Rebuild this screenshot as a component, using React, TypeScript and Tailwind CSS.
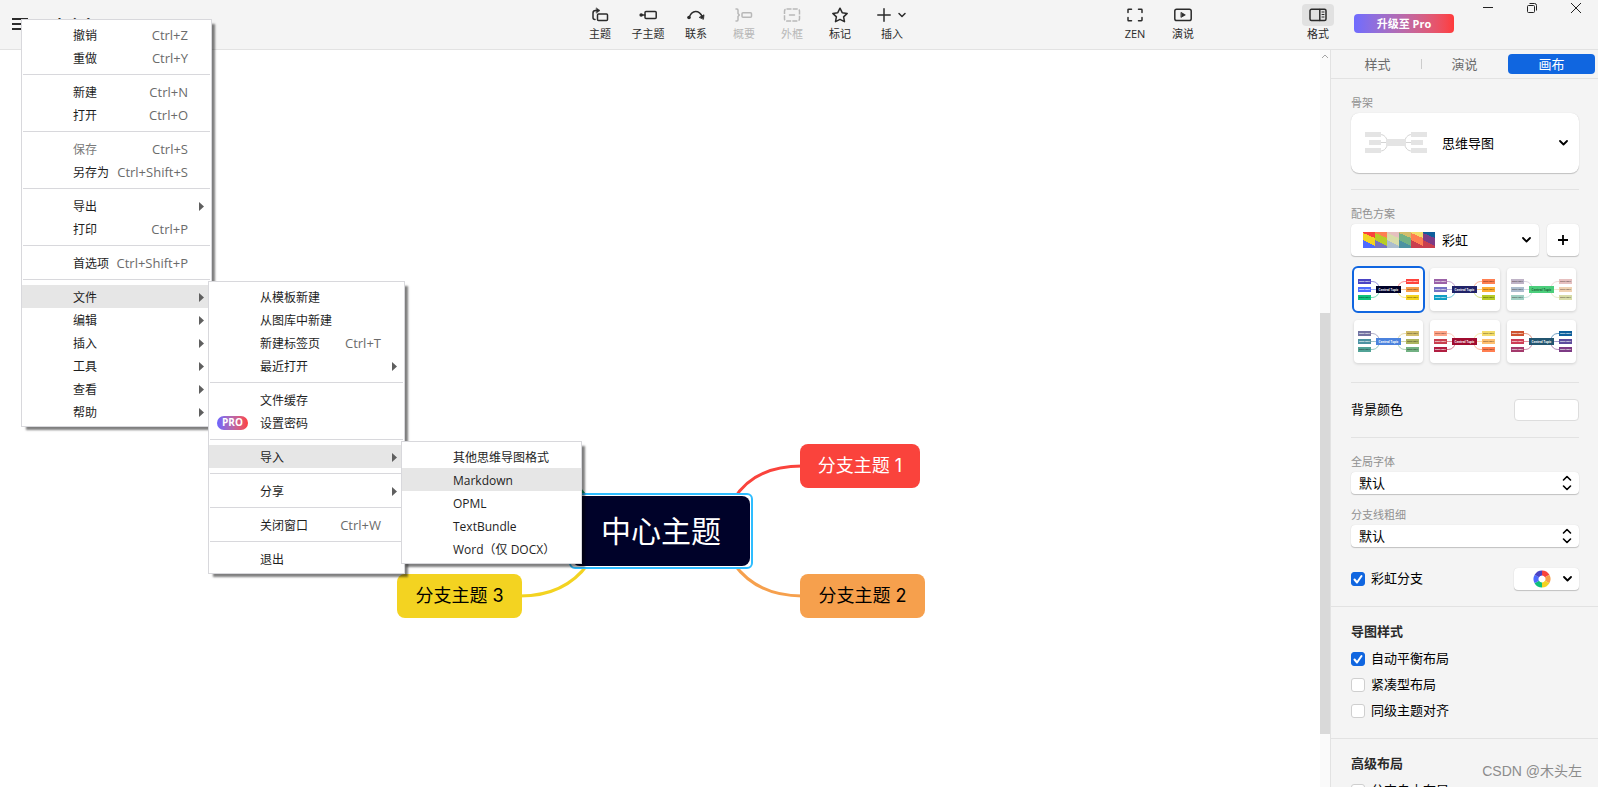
import React from "react";

type MenuEntry =
  | { label: string; shortcut?: string; sub?: boolean; active?: boolean; disabled?: boolean; pro?: boolean }
  | "sep";

const mainMenu: MenuEntry[] = [
  { label: "撤销", shortcut: "Ctrl+Z" },
  { label: "重做", shortcut: "Ctrl+Y" },
  "sep",
  { label: "新建", shortcut: "Ctrl+N" },
  { label: "打开", shortcut: "Ctrl+O" },
  "sep",
  { label: "保存", shortcut: "Ctrl+S", disabled: true },
  { label: "另存为", shortcut: "Ctrl+Shift+S" },
  "sep",
  { label: "导出", sub: true },
  { label: "打印", shortcut: "Ctrl+P" },
  "sep",
  { label: "首选项", shortcut: "Ctrl+Shift+P" },
  "sep",
  { label: "文件", sub: true, active: true },
  { label: "编辑", sub: true },
  { label: "插入", sub: true },
  { label: "工具", sub: true },
  { label: "查看", sub: true },
  { label: "帮助", sub: true },
];

const fileMenu: MenuEntry[] = [
  { label: "从模板新建" },
  { label: "从图库中新建" },
  { label: "新建标签页", shortcut: "Ctrl+T" },
  { label: "最近打开", sub: true },
  "sep",
  { label: "文件缓存" },
  { label: "设置密码", pro: true },
  "sep",
  { label: "导入", sub: true, active: true },
  "sep",
  { label: "分享", sub: true },
  "sep",
  { label: "关闭窗口", shortcut: "Ctrl+W" },
  "sep",
  { label: "退出" },
];

const importMenu: MenuEntry[] = [
  { label: "其他思维导图格式" },
  { label: "Markdown", active: true },
  { label: "OPML" },
  { label: "TextBundle" },
  { label: "Word（仅 DOCX）" },
];

function Menu({ items, className }: { items: MenuEntry[]; className: string }) {
  return (
    <div
      role="menu"
      className={`absolute border border-[#d8d8dc] bg-white py-[3px] text-xs text-[#1e1e1e] shadow-[4px_4px_2px_-1px_rgba(0,0,0,0.5)] ${className}`}
    >
      {items.map((item, i) =>
        item === "sep" ? (
          <div key={i} className="mx-px my-[5px] h-px bg-[#d8d8dc]" />
        ) : (
          <button
            key={i}
            role="menuitem"
            disabled={item.disabled}
            className={`relative flex h-[23px] w-full items-center justify-between pt-[3px] pr-[23px] pl-[51px] whitespace-nowrap disabled:text-[#7a7a7a] ${
              item.active ? "bg-[#e6e6e6]" : ""
            }`}
          >
            {item.pro && (
              <span className="absolute top-[5px] left-2 flex h-[14px] w-[31px] items-center justify-center rounded-full bg-linear-to-r from-[#6c63ff] to-[#ff3b3b] text-[10px] font-bold text-white">
                PRO
              </span>
            )}
            <span>{item.label}</span>
            {item.shortcut && <span className="text-[13px] text-[#6b6b6b]">{item.shortcut}</span>}
            {item.sub && (
              <svg className="absolute top-2 right-[7px]" width="5" height="9" viewBox="0 0 5 9">
                <path d="M0 0L5 4.5L0 9Z" fill="#5f5f5f" />
              </svg>
            )}
          </button>
        )
      )}
    </div>
  );
}

function Icon({ width = 18, children }: { width?: number; children: React.ReactNode }) {
  return (
    <svg
      width={width}
      height="16"
      viewBox={`0 0 ${width} 16`}
      fill="none"
      stroke="currentColor"
      strokeWidth="1.5"
      strokeLinecap="round"
      strokeLinejoin="round"
    >
      {children}
    </svg>
  );
}

function ToolButton({
  label,
  icon,
  wide,
  disabled,
  selected,
}: {
  label: string;
  icon: React.ReactNode;
  wide?: boolean;
  disabled?: boolean;
  selected?: boolean;
}) {
  return (
    <button
      disabled={disabled}
      className={`flex flex-col items-center pt-1 text-[11px] leading-4 text-[#2b2b2b] disabled:text-[#b8b8b8] ${
        wide ? "w-14" : "w-12"
      }`}
    >
      <span
        className={`flex h-[22px] w-8 items-center justify-center rounded ${selected ? "bg-[#e1e1e1]" : ""}`}
      >
        {icon}
      </span>
      {label}
    </button>
  );
}

function Chevron({ className = "" }: { className?: string }) {
  return (
    <svg className={`pointer-events-none ${className}`} width="9" height="6" viewBox="0 0 9 6" fill="none">
      <path d="M1 1L4.5 4.5L8 1" stroke="currentColor" strokeWidth="1.8" strokeLinecap="round" strokeLinejoin="round" />
    </svg>
  );
}

function UpDown({ className = "" }: { className?: string }) {
  return (
    <svg
      className={`pointer-events-none ${className}`}
      width="10"
      height="16"
      viewBox="0 0 10 16"
      fill="none"
      stroke="currentColor"
      strokeWidth="1.6"
      strokeLinecap="round"
      strokeLinejoin="round"
    >
      <path d="M1.5 5L5 1.5L8.5 5M1.5 11L5 14.5L8.5 11" />
    </svg>
  );
}

const field = "rounded bg-white shadow-[0_1px_1px_rgba(0,0,0,0.2),0_0_1px_rgba(0,0,0,0.15)]";

function FieldSelect({ id, label }: { id: string; label: string }) {
  return (
    <>
      <label htmlFor={id} className="block h-4 text-[11px] leading-4 text-[#919191]">
        {label}
      </label>
      <div className="relative mt-[2px]">
        <select id={id} className={`block h-[22px] w-full appearance-none pt-px pl-2 text-[13px] ${field}`}>
          <option>默认</option>
        </select>
        <UpDown className="absolute top-[3px] right-[7px]" />
      </div>
    </>
  );
}

function Check({ label, checked }: { label: string; checked?: boolean }) {
  return (
    <label className="relative flex h-5 items-center gap-[6px] text-[13px]">
      <input
        type="checkbox"
        defaultChecked={checked}
        className="peer size-[14px] shrink-0 appearance-none rounded-[3px] border border-[#cfcfcf] bg-white checked:border-[#1066e0] checked:bg-[#1066e0]"
      />
      <svg
        className="pointer-events-none absolute top-[3px] left-0 hidden peer-checked:block"
        width="14"
        height="14"
        viewBox="0 0 14 14"
        fill="none"
      >
        <path d="M3.5 7.5L6 10.5L10.5 4" stroke="white" strokeWidth="2" strokeLinecap="round" strokeLinejoin="round" />
      </svg>
      {label}
    </label>
  );
}

const themes = [
  { name: "Rainbow 1", center: "#000229", left: ["#4a43c4", "#4d6bff", "#0fc27e"], right: ["#ff433c", "#f79f49", "#f3d321"] },
  { name: "Rainbow 2", center: "#212368", left: ["#9b62a7", "#7572c2", "#0e9fc4"], right: ["#ff7f51", "#ffae34", "#b7cc27"] },
  { name: "Rainbow 3", center: "#4cce7c", left: ["#bfb3c7", "#acbdce", "#a0d0c3"], right: ["#e6c0c0", "#f0d2b2", "#d8dca8"] },
  { name: "Rainbow 4", center: "#4b82dd", left: ["#7472a0", "#4d92a1", "#52a397"], right: ["#d2bd6a", "#adb560", "#73b183"] },
  { name: "Rainbow 5", center: "#a00c2f", left: ["#ffa588", "#c93f4e", "#b11e41"], right: ["#f3dc6b", "#ffc070", "#ff7f51"] },
  { name: "Rainbow 6", center: "#235570", left: ["#cf5330", "#cd3c56", "#a43a6c"], right: ["#0e5f9c", "#5c4b9c", "#7d3b85"] },
];

// dark labels are used on the lighter fills
const lightFills = [
  "#0fc27e", "#f79f49", "#f3d321", "#ff7f51", "#ffae34", "#b7cc27", "#bfb3c7", "#acbdce", "#a0d0c3", "#e6c0c0",
  "#f0d2b2", "#d8dca8", "#52a397", "#d2bd6a", "#adb560", "#73b183", "#ffa588", "#f3dc6b", "#ffc070", "#4cce7c",
];
const labelColor = (fill: string) => (lightFills.includes(fill) ? "rgba(0,0,0,0.6)" : "#ffffff");

function ThemeThumb({ theme }: { theme: (typeof themes)[number] }) {
  return (
    <svg width="69" height="43" viewBox="0 0 69 43" fontWeight="700" textAnchor="middle">
      {[0, 1, 2].map((i) => {
        const y = 11 + i * 8;
        return (
          <g key={i} fill="none">
            <path d={`M17 ${y + 2.5}C22 ${y + 2.5} 24 ${y + 4 - i * 1.5} 26 21.5`} stroke={theme.left[i]} strokeWidth="0.6" />
            <path d={`M52 ${y + 2.5}C47 ${y + 2.5} 45 ${y + 4 - i * 1.5} 43 21.5`} stroke={theme.right[i]} strokeWidth="0.6" />
            <rect x="4" y={y} width="13" height="5" fill={theme.left[i]} />
            <rect x="52" y={y} width="13" height="5" fill={theme.right[i]} />
            <text x="10.5" y={y + 3.3} fontSize="2" fill={labelColor(theme.left[i])}>Main Topic</text>
            <text x="58.5" y={y + 3.3} fontSize="2" fill={labelColor(theme.right[i])}>Main Topic</text>
          </g>
        );
      })}
      <rect x="22" y="18" width="25" height="7" fill={theme.center} />
      <text x="34.5" y="22.5" fontSize="3" fill={labelColor(theme.center)}>Central Topic</text>
    </svg>
  );
}

const swatches = [
  ["#fa433c", "#f3d321", "#4d6bff"],
  ["#ff7f51", "#b7cc27", "#7572c2"],
  ["#e6c0c0", "#d8dca8", "#acbdce"],
  ["#d2bd6a", "#73b183", "#4d92a1"],
  ["#f3dc6b", "#ff7f51", "#c93f4e"],
  ["#0e5f9c", "#7d3b85", "#c93f4e"],
];

const wheel = ["#fa433c", "#f79f49", "#f3d321", "#0fbf7c", "#4d6bff", "#4a43c4"];

function Toolbar() {
  return (
    <header className="flex h-[50px] shrink-0 border-b border-[#e2e2e2] bg-[#f4f4f4]">
      <div className="flex min-w-0 flex-1">
        <button aria-label="菜单" className="mt-4 ml-3 h-4 w-4 text-[#2b2b2b]">
          <svg width="16" height="14" viewBox="0 0 16 14" stroke="currentColor" strokeWidth="2" fill="none">
            <path d="M0 2H16M0 7H16M0 12H16" />
          </svg>
        </button>
        <h1 className="mt-[15px] ml-6 text-[15px] leading-5 font-bold whitespace-nowrap text-[#2b2b2b]">未命名</h1>
        <div className="mr-[191px] ml-auto flex">
          <ToolButton
            label="主题"
            icon={
              <Icon>
                <rect x="6.5" y="7" width="10" height="6.5" rx="1" />
                <path d="M4 12.5C2.5 12.5 2 12 2 10.5V6Q2 3.5 4.5 3.5H6" />
                <path d="M5.5 1L9 3.5L5.5 6Z" fill="currentColor" strokeWidth="0.5" />
              </Icon>
            }
          />
          <ToolButton
            label="子主题"
            icon={
              <Icon>
                <circle cx="2.2" cy="8" r="1.8" fill="currentColor" stroke="none" />
                <path d="M2 8H6" />
                <rect x="6" y="4.5" width="11.2" height="7" rx="1" />
              </Icon>
            }
          />
          <ToolButton
            label="联系"
            icon={
              <Icon>
                <path d="M2 10.5C5 2.5 12 2.5 15.5 10" />
                <circle cx="2" cy="10.5" r="1.8" fill="currentColor" stroke="none" />
                <path d="M12.5 10.2L17 7.8L16.5 12Z" fill="currentColor" strokeWidth="0.8" />
              </Icon>
            }
          />
          <ToolButton
            label="概要"
            disabled
            icon={
              <Icon>
                <path d="M1 2H2Q3 2 3 3.2V6.5L4.3 8L3 9.5V12.8Q3 14 2 14H1" />
                <rect x="7" y="5.7" width="9.5" height="4.6" rx="1" />
              </Icon>
            }
          />
          <ToolButton
            label="外框"
            disabled
            icon={
              <Icon>
                <rect x="1.5" y="2" width="15" height="12" rx="2" strokeDasharray="5 1.2" strokeLinecap="butt" />
                <path d="M6.5 8H11.5" />
              </Icon>
            }
          />
          <ToolButton
            label="标记"
            icon={
              <Icon>
                <path d="M9 1.2L11.2 5.7L16.2 6.4L12.6 9.9L13.5 14.7L9 12.4L4.5 14.7L5.4 9.9L1.8 6.4L6.8 5.7Z" />
              </Icon>
            }
          />
          <ToolButton
            label="插入"
            wide
            icon={
              <Icon width={32}>
                <path d="M8 1.8V14.2M1.8 8H14.2M23 6.5L26 9.5L29 6.5" />
              </Icon>
            }
          />
        </div>
        <div className="mr-[87px] flex">
          <ToolButton
            label="ZEN"
            icon={
              <Icon>
                <path d="M5.5 2.2H2.7Q2 2.2 2 2.9V5.5M12.5 2.2H15.3Q16 2.2 16 2.9V5.5M5.5 13.8H2.7Q2 13.8 2 13.1V10.5M12.5 13.8H15.3Q16 13.8 16 13.1V10.5" />
              </Icon>
            }
          />
          <ToolButton
            label="演说"
            icon={
              <Icon>
                <rect x="0.8" y="2.3" width="16.4" height="11.2" rx="1.8" />
                <path d="M7.3 5.6L11.3 7.9L7.3 10.2Z" fill="currentColor" strokeWidth="0.8" />
              </Icon>
            }
          />
        </div>
      </div>
      <div className="flex w-[304px] shrink-0">
        <ToolButton
          label="格式"
          selected
          icon={
            <Icon>
              <rect x="1" y="2.3" width="16" height="11.2" rx="1.5" />
              <path d="M10.8 2.5V13.5" />
              <path d="M13 5H15M13 7.5H15M13 10H15" strokeWidth="1" />
            </Icon>
          }
        />
        <button className="mt-[14px] ml-3 h-[19px] w-[100px] rounded bg-linear-to-r from-[#6f6bff] to-[#ff3a3a] text-[11px] leading-[19px] font-bold text-white">
          升级至 Pro
        </button>
        <div className="ml-auto flex items-start gap-[34px] pt-[3px] pr-[17px] text-[#222222]">
          <button aria-label="最小化" className="size-[10px]">
            <svg width="10" height="10" viewBox="0 0 10 10" stroke="currentColor">
              <path d="M0 4.5H10" />
            </svg>
          </button>
          <button aria-label="还原" className="size-[10px]">
            <svg width="10" height="10" viewBox="0 0 10 10" fill="none" stroke="currentColor">
              <rect x="0.5" y="2.5" width="7" height="7" rx="1" />
              <path d="M2.5 0.5H7.5Q9.5 0.5 9.5 2.5V7.5" />
            </svg>
          </button>
          <button aria-label="关闭" className="size-[10px]">
            <svg width="10" height="10" viewBox="0 0 10 10" stroke="currentColor">
              <path d="M0 0L10 10M10 0L0 10" />
            </svg>
          </button>
        </div>
      </div>
    </header>
  );
}

function Canvas() {
  return (
    <main className="relative min-w-0 flex-1 overflow-hidden bg-white font-['Inter','Noto_Sans_CJK_SC',sans-serif]">
      <svg className="absolute top-0 left-0" width="1000" height="620" viewBox="0 0 1000 620" fill="none" strokeWidth="3">
        <path d="M734 449C748 426 772 416 802 416" stroke="#fa433c" />
        <path d="M734 514C750 536 772 546 802 546" stroke="#f6a04d" />
        <path d="M588 514C572 536 550 546 520 546" stroke="#f3d321" />
        <path d="M588 449C572 426 550 416 520 416" stroke="#0fa968" />
      </svg>
      <div className="absolute top-[443px] left-[569px] h-[76px] w-[184px] rounded-md border-2 border-[#2ebdff] bg-white p-px">
        <div className="flex h-full items-center justify-center rounded-lg bg-[#000229] text-[30px] text-white">中心主题</div>
      </div>
      <div className="absolute top-[394px] left-[800px] flex h-11 w-[120px] items-center justify-center rounded-lg bg-[#fa433c] text-lg text-white">
        分支主题 1
      </div>
      <div className="absolute top-[524px] left-[800px] flex h-11 w-[125px] items-center justify-center rounded-lg bg-[#f6a04d] text-lg">
        分支主题 2
      </div>
      <div className="absolute top-[524px] left-[397px] flex h-11 w-[125px] items-center justify-center rounded-lg bg-[#f3d321] text-lg">
        分支主题 3
      </div>
    </main>
  );
}

function Sidebar() {
  return (
    <aside className="w-[268px] shrink-0 overflow-hidden border-l border-[#e2e2e2] bg-[#f4f4f4]">
      <div className="grid h-[29px] grid-cols-3 items-center border-b border-[#e2e2e2] px-[3px] text-[13px] text-[#6b6b6b]">
        <button className="h-5 leading-5">样式</button>
        <button className="relative h-5 leading-5">
          <span className="absolute top-[5px] left-0 h-[10px] w-px bg-[#cccccc]" />
          演说
        </button>
        <button className="h-5 rounded bg-[#1066e0] leading-5 text-white">画布</button>
      </div>

      <section className="border-b border-[#e2e2e2] pr-[19px] pb-4 pl-5">
        <div className="border-b border-[#e2e2e2] py-4">
          <label htmlFor="skeleton" className="block h-4 text-[11px] leading-4 text-[#919191]">
            骨架
          </label>
          <div className="relative mt-[2px]">
            <select
              id="skeleton"
              className="block h-[60px] w-full appearance-none rounded-lg bg-white pt-[2px] pl-[91px] text-[13px] shadow-[0_1px_1px_rgba(0,0,0,0.2),0_0_1px_rgba(0,0,0,0.15)]"
            >
              <option>思维导图</option>
            </select>
            <svg className="pointer-events-none absolute top-[18px] left-[14px]" width="62" height="24" viewBox="0 0 62 24" fill="none">
              <g stroke="#d4d4d4">
                <path d="M15 3.5C20 3.5 21 7 23 10.5M15 20C20 20 21 17 23 13M15 11.5H22" />
                <path d="M47 3.5C42 3.5 41 7 39 10.5M47 20C42 20 41 17 39 13M47 11.5H40" />
              </g>
              <g fill="#e4e4e4">
                <rect x="0" y="1" width="16" height="5" />
                <rect x="4" y="9" width="12" height="5" />
                <rect x="0" y="17" width="16" height="5" />
                <rect x="21" y="8" width="20" height="7" />
                <rect x="46" y="1" width="16" height="5" />
                <rect x="46" y="9" width="12" height="5" />
                <rect x="46" y="17" width="16" height="5" />
              </g>
            </svg>
            <Chevron className="absolute top-[27px] right-[11px]" />
          </div>
        </div>

        <div className="border-b border-[#e2e2e2] pt-4 pb-[19px]">
          <label htmlFor="scheme" className="block h-4 text-[11px] leading-4 text-[#919191]">
            配色方案
          </label>
          <div className="mt-[2px] flex gap-2">
            <div className="relative flex-1">
              <select id="scheme" className={`block h-8 w-full appearance-none pt-[2px] pl-[91px] text-[13px] ${field}`}>
                <option>彩虹</option>
              </select>
              <svg className="pointer-events-none absolute top-2 left-3" width="72" height="16" viewBox="0 0 72 16" shapeRendering="crispEdges">
                {swatches.map(([a, b, c], i) => (
                  <g key={i} transform={`translate(${i * 12} 0)`}>
                    <rect width="12" height="16" fill={a} />
                    <path d="M0 1L12 6V16H0Z" fill={b} />
                    <path d="M0 8L12 14V16H0Z" fill={c} />
                  </g>
                ))}
              </svg>
              <Chevron className="absolute top-[13px] right-2" />
            </div>
            <button aria-label="新增配色" className={`flex size-8 items-center justify-center ${field}`}>
              <svg width="10" height="10" viewBox="0 0 10 10" stroke="currentColor" strokeWidth="1.8">
                <path d="M5 0V10M0 5H10" />
              </svg>
            </button>
          </div>
          <div className="mt-3 grid grid-cols-3 gap-x-[7px] gap-y-[9px] px-[3px]">
            {themes.map((theme, i) => (
              <button
                key={theme.name}
                aria-label={theme.name}
                className={`flex h-[43px] justify-center rounded bg-white ${
                  i === 0 ? "outline-2 outline-[#1066e0]" : "shadow-[0_1px_3px_rgba(0,0,0,0.15)]"
                }`}
              >
                <ThemeThumb theme={theme} />
              </button>
            ))}
          </div>
        </div>

        <div className="flex items-center justify-between border-b border-[#e2e2e2] py-4 text-[13px]">
          背景颜色
          <button aria-label="背景颜色" className="h-[22px] w-[65px] rounded border border-[#dddddd] bg-white" />
        </div>

        <div className="pt-4">
          <FieldSelect id="global-font" label="全局字体" />
        </div>
        <div className="pt-[13px]">
          <FieldSelect id="branch-width" label="分支线粗细" />
        </div>

        <div className="mt-[21px] flex h-[22px] items-center justify-between">
          <Check label="彩虹分支" checked />
          <button aria-label="分支颜色" className={`flex h-[22px] w-[65px] items-center justify-end gap-3 pr-[7px] ${field}`}>
            <svg width="18" height="18" viewBox="0 0 18 18" fill="none" strokeWidth="5">
              {wheel.map((color, i) => (
                <circle
                  key={color}
                  cx="9"
                  cy="9"
                  r="6"
                  stroke={color}
                  pathLength="6"
                  strokeDasharray="1 5"
                  transform={`rotate(${i * 60 - 90} 9 9)`}
                />
              ))}
            </svg>
            <Chevron />
          </button>
        </div>
      </section>

      <section className="border-b border-[#e2e2e2] px-5 pt-[14px] pb-[17px]">
        <h2 className="text-[13px] leading-5 font-bold text-[#2b2b2b]">导图样式</h2>
        <div className="mt-2 flex flex-col gap-[6px]">
          <Check label="自动平衡布局" checked />
          <Check label="紧凑型布局" />
          <Check label="同级主题对齐" />
        </div>
      </section>

      <section className="px-5 pt-[14px]">
        <h2 className="text-[13px] leading-5 font-bold text-[#2b2b2b]">高级布局</h2>
        <div className="mt-2">
          <Check label="分支自由布局" />
        </div>
      </section>
    </aside>
  );
}

export default function App() {
  return (
    <div className="relative flex h-screen flex-col overflow-hidden bg-white font-['Open_Sans','Noto_Sans_CJK_SC',sans-serif] text-black">
      <Toolbar />
      <div className="flex min-h-0 flex-1">
        <Canvas />
        <div className="flex w-[10px] shrink-0 flex-col bg-[#fafafa]">
          <svg className="mt-1 self-center" width="8" height="5" viewBox="0 0 8 5" fill="none">
            <path d="M1 4L4 1L7 4" stroke="#a5a5a5" />
          </svg>
          <div className="mt-[254px] h-[421px] bg-[#d9d9d9]" />
        </div>
        <Sidebar />
      </div>

      <Menu items={mainMenu} className="top-[19px] left-[21px] w-[191px]" />
      <Menu items={fileMenu} className="top-[281px] left-[208px] w-[197px]" />
      <Menu items={importMenu} className="top-[441px] left-[401px] w-[181px]" />

      <div className="pointer-events-none absolute right-4 bottom-1 font-['Liberation_Sans','Noto_Sans_CJK_SC',sans-serif] text-sm leading-6 text-[#8c8c8c]">
        CSDN @木头左
      </div>
    </div>
  );
}
